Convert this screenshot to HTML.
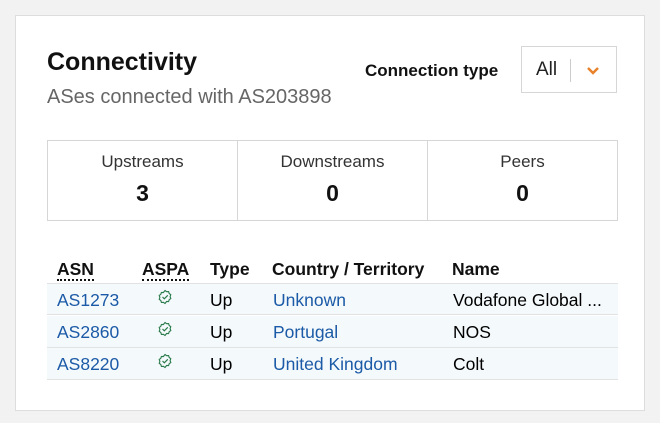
<!DOCTYPE html>
<html><head><style>
*{margin:0;padding:0;box-sizing:border-box}
body{width:660px;height:423px;background:#f2f2f2;font-family:"Liberation Sans",sans-serif;position:relative;overflow:hidden}
.card{position:absolute;left:15px;top:15px;width:630px;height:396px;background:#fff;border:1px solid #ddd}
.a{position:absolute;white-space:nowrap}
.stats{position:absolute;left:31px;top:124px;width:571px;height:81px;border:1px solid #d6d6d6;display:flex}
.stats div{flex:1;text-align:center;border-right:1px solid #d6d6d6}
.stats div:last-child{border-right:none}
.stats .l{font-size:17px;color:#333;margin-top:11px}
.stats .v{font-size:23px;font-weight:bold;margin-top:8px;color:#111}
.row{position:absolute;left:31px;width:571px;height:32px;background:#f4f9fc;border-bottom:1px solid #e2e2e2;font-size:17.5px}
.row span{position:absolute;top:6px}
.lk{color:#1b5aa6}
.th{position:absolute;top:243px;font-size:17.5px;font-weight:bold;color:#111}
.dot{border-bottom:2px dotted #111}
</style></head><body>
<div class="card">
<div class="a" style="left:31px;top:32px;font-size:25px;font-weight:bold;color:#111">Connectivity</div>
<div class="a" style="left:31px;top:70px;font-size:20px;color:#666">ASes connected with AS203898</div>
<div class="a" style="left:349px;top:45px;font-size:17px;font-weight:bold;color:#111">Connection type</div>
<div class="a" style="left:505px;top:30px;width:96px;height:47px;border:1px solid #d6d6d6">
<span class="a" style="left:14px;top:12px;font-size:19px;color:#222">All</span>
<span class="a" style="left:48px;top:12px;width:1px;height:23px;background:#ccc"></span>
<svg class="a" style="left:64px;top:19px" width="14" height="10" viewBox="0 0 14 10"><path d="M2 2l5 5 5-5" stroke="#e8822a" stroke-width="2.5" fill="none"/></svg>
</div>
<div class="stats">
<div><p class="l">Upstreams</p><p class="v">3</p></div>
<div><p class="l">Downstreams</p><p class="v">0</p></div>
<div><p class="l">Peers</p><p class="v">0</p></div>
</div>
<span class="th" style="left:41px"><span class="dot">ASN</span></span>
<span class="th" style="left:126px"><span class="dot">ASPA</span></span>
<span class="th" style="left:194px">Type</span>
<span class="th" style="left:256px">Country / Territory</span>
<span class="th" style="left:436px">Name</span>
<div class="row" style="top:267px;border-top:1px solid #e2e2e2"><span class="lk" style="left:10px">AS1273</span><span style="left:110px;top:5px"><svg width="16" height="16" viewBox="0 0 16 16"><path d="M8 1.5l1.6 1.2 2-.1.6 1.9 1.6 1.2-.7 1.9.7 1.9-1.6 1.2-.6 1.9-2-.1L8 14.5l-1.6-1.2-2 .1-.6-1.9-1.6-1.2.7-1.9-.7-1.9 1.6-1.2.6-1.9 2 .1z" fill="none" stroke="#2a7a4a" stroke-width="1.1"/><path d="M5.5 8l1.8 1.8L10.8 6.3" fill="none" stroke="#2a7a4a" stroke-width="1.2"/></svg></span><span style="left:163px">Up</span><span class="lk" style="left:226px">Unknown</span><span style="left:406px">Vodafone Global ...</span></div>
<div class="row" style="top:300px"><span class="lk" style="left:10px">AS2860</span><span style="left:110px;top:5px"><svg width="16" height="16" viewBox="0 0 16 16"><path d="M8 1.5l1.6 1.2 2-.1.6 1.9 1.6 1.2-.7 1.9.7 1.9-1.6 1.2-.6 1.9-2-.1L8 14.5l-1.6-1.2-2 .1-.6-1.9-1.6-1.2.7-1.9-.7-1.9 1.6-1.2.6-1.9 2 .1z" fill="none" stroke="#2a7a4a" stroke-width="1.1"/><path d="M5.5 8l1.8 1.8L10.8 6.3" fill="none" stroke="#2a7a4a" stroke-width="1.2"/></svg></span><span style="left:163px">Up</span><span class="lk" style="left:226px">Portugal</span><span style="left:406px">NOS</span></div>
<div class="row" style="top:332px"><span class="lk" style="left:10px">AS8220</span><span style="left:110px;top:5px"><svg width="16" height="16" viewBox="0 0 16 16"><path d="M8 1.5l1.6 1.2 2-.1.6 1.9 1.6 1.2-.7 1.9.7 1.9-1.6 1.2-.6 1.9-2-.1L8 14.5l-1.6-1.2-2 .1-.6-1.9-1.6-1.2.7-1.9-.7-1.9 1.6-1.2.6-1.9 2 .1z" fill="none" stroke="#2a7a4a" stroke-width="1.1"/><path d="M5.5 8l1.8 1.8L10.8 6.3" fill="none" stroke="#2a7a4a" stroke-width="1.2"/></svg></span><span style="left:163px">Up</span><span class="lk" style="left:226px">United Kingdom</span><span style="left:406px">Colt</span></div>
</div>
</body></html>
